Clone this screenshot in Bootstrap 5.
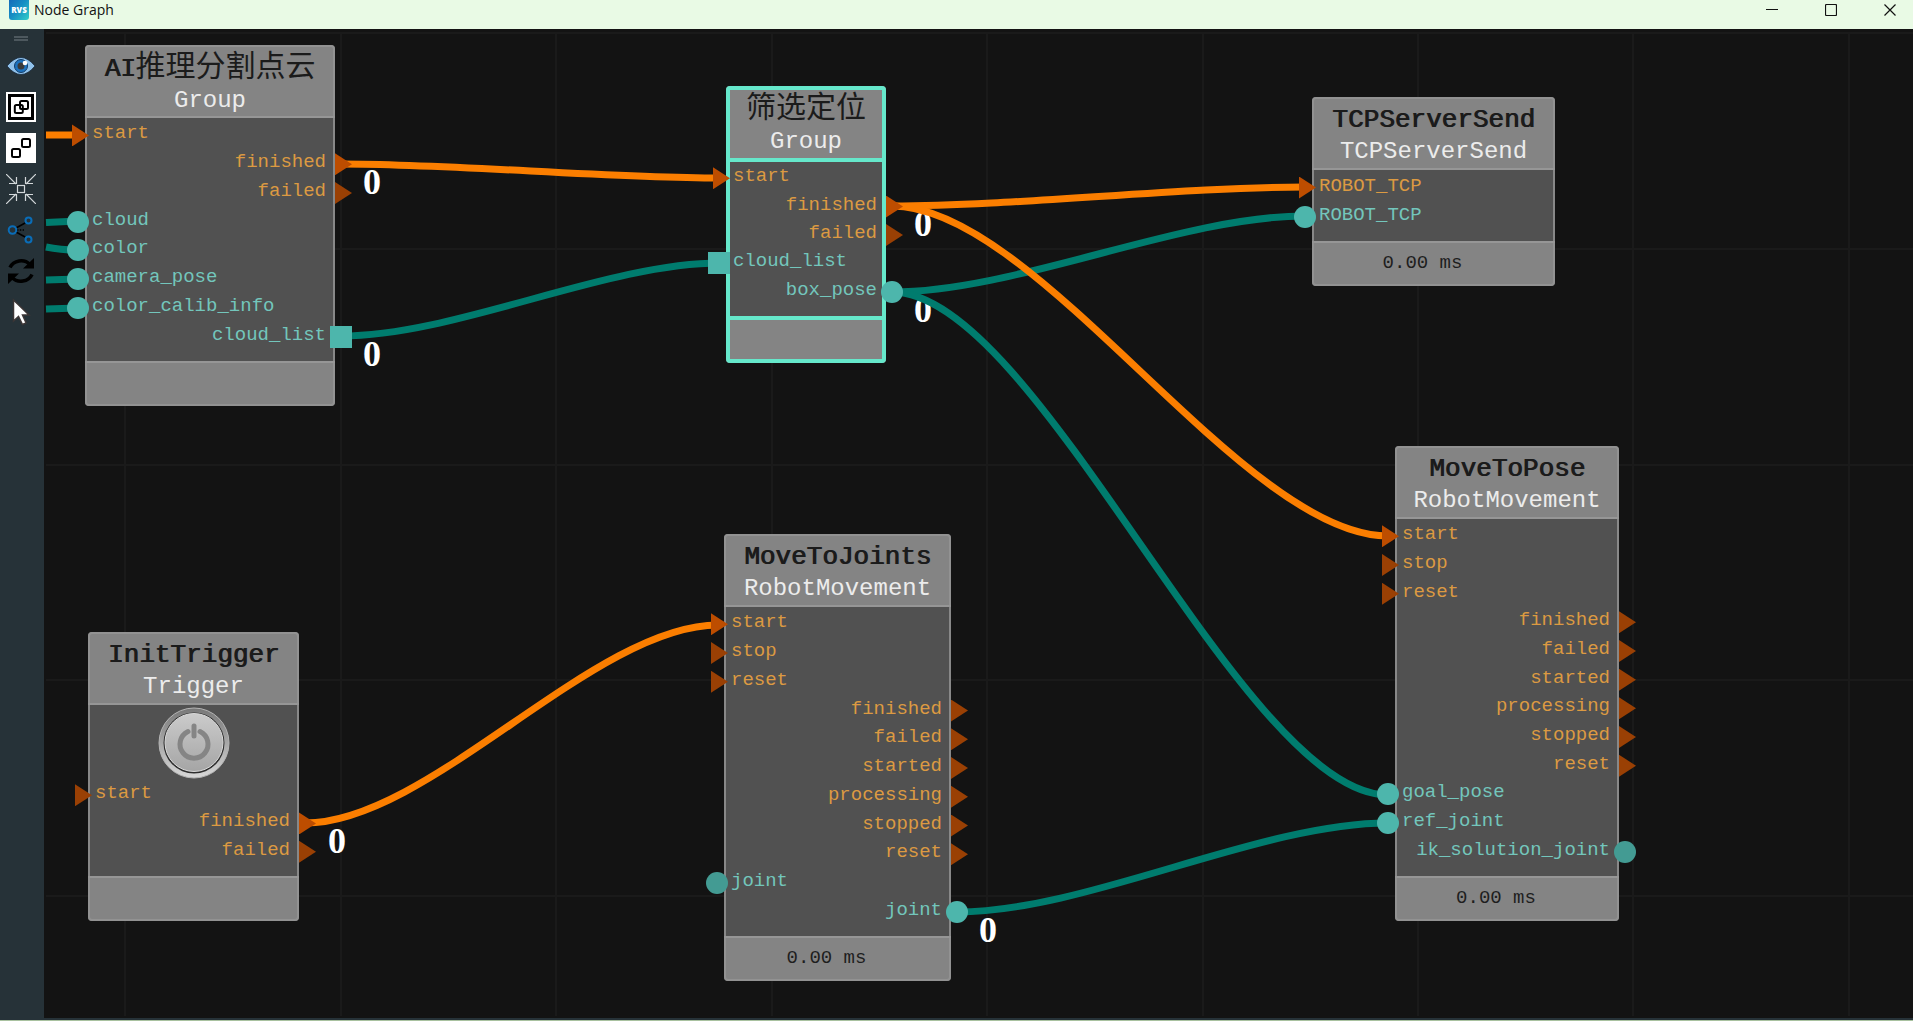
<!DOCTYPE html>
<html lang="zh-CN">
<head>
<meta charset="utf-8">
<meta name="viewport" content="width=device-width, initial-scale=1">
<title>Node Graph</title>
<link href="https://cdn.jsdelivr.net/npm/bootstrap@5.3.0/dist/css/bootstrap.min.css" rel="stylesheet">
<style>
  body { font-family: "Open Sans", "Noto Sans CJK SC", sans-serif; background: #131313; }
  .titlebar { height: 29px; background: #e9fae5; color: #111; }
  .titlebar .app-name { font-size: 14px; line-height: 20px; }
  .win-controls { gap: 13px; }
  .win-btn { width: 46px; height: 20px; color: #111; }
  .toolbar { width: 44px; background: #263238; padding: 7px 2px 0 0; }
  .grip { width: 14px; height: 5px; border-top: 2px solid #4d585e; border-bottom: 2px solid #4d585e; margin-bottom: 10px; }
  .tool { width: 30px; height: 30px; margin-bottom: 11px; }
  .tool svg, .win-btn svg, .power svg { display: block; }
  .bottom-edge { height: 3px; background: #a9c2a0; border-top: 2px solid #263238; }

  .canvas { background: #131313; font-family: "Liberation Mono", "Noto Sans CJK SC", monospace; }
  .wires { left: 0; top: 0; }
  .wires path { fill: none; stroke-width: 7; }
  .wires .flow { stroke: #fb7e00; }
  .wires .data { stroke: #007c6e; }
  .wires text { font: bold 36px "Liberation Serif", serif; fill: #fff; text-anchor: middle; }
  .wires .grid-lines { stroke: #1a1a1a; stroke-width: 2; }

  .gnode { position: absolute; border: 0; border-radius: 4px; background: none; }
  .gnode::after { content: ""; position: absolute; inset: 0; border: 2px solid #969696; border-radius: 4px; pointer-events: none; opacity: .8; }
  .gnode .card-header { height: 73px; padding: 8px 0 0; background: rgba(139, 139, 139, .94); border-bottom: 2px solid #969696; border-radius: 4px 4px 0 0; text-align: center; }
  .gnode .card-body { display: flex; flex-direction: column; padding: 1px 0 12px; background: #515151; }
  .gnode .card-footer { height: 45px; padding: 0 22px 3px 0; background: rgba(139, 139, 139, .94); border-top: 2px solid #969696; border-radius: 0 0 4px 4px; color: #1e1e1e; font-size: 19px; }
  .node-name { font-size: 26px; line-height: 31px; font-weight: 400; color: #1b1b1b; text-shadow: 1px 0 #1b1b1b; margin: 0; white-space: nowrap; }
  .node-name .han { font-size: 30px; text-shadow: none; }
  .node-kind { font-size: 24px; line-height: 31px; color: #ececec; }

  .port { position: relative; flex: 1 1 0; display: flex; align-items: center; padding: 0 9px 0 7px; font-size: 19px; line-height: 24px; color: #dc9a42; }
  .port.out { justify-content: flex-end; }
  .port.teal { color: #73c6bc; }
  .pin { position: absolute; z-index: 2; top: calc(50% - 9px); left: -18px; width: 22px; height: 22px; border-radius: 50%; background: #439b93; }
  .out .pin { left: auto; right: -17px; }
  .pin.on { background: #4db6ac; }
  .pin.sq { border-radius: 0; }
  .pin.tri { left: -13px; width: 17px; border-radius: 0; background: #9a4004; clip-path: polygon(0 0, 100% 50%, 0 100%); }
  .out .pin.tri { left: auto; right: -17px; }
  .pin.tri.on { background: #bd4d00; }

  .selected::after { border: 4px solid #66e8cb; opacity: 1; z-index: 1; }
  .selected .card-header, .selected .card-footer { border-color: #66e8cb; border-width: 4px; }
  .selected .card-header { height: 76px; }
  .selected .card-body { padding-top: 0; }
  .selected .card-footer { height: 47px; }

  .power { height: 73px; flex: 0 0 auto; }

  #segment { left: 41px; top: 16px; width: 250px; height: 361px; }
  #filter { left: 682px; top: 57px; width: 160px; height: 277px; }
  #tcp { left: 1268px; top: 68px; width: 243px; height: 189px; }
  #pose { left: 1351px; top: 417px; width: 224px; height: 475px; }
  #joints { left: 680px; top: 505px; width: 227px; height: 447px; }
  #init { left: 44px; top: 603px; width: 211px; height: 289px; }
</style>
</head>
<body>
<div class="d-flex flex-column vh-100 overflow-hidden">
  <header class="titlebar d-flex align-items-start flex-shrink-0">
    <svg class="ms-2" width="22" height="20" viewBox="0 0 22 20" aria-hidden="true">
      <defs><linearGradient id="logo" x1="0" y1="0" x2="1" y2="1"><stop offset="0" stop-color="#1565b8"/><stop offset=".5" stop-color="#168fc4"/><stop offset="1" stop-color="#35cfc9"/></linearGradient></defs>
      <rect x="1" y="-3" width="20" height="23" rx="3" fill="url(#logo)"/>
      <text x="11" y="13" text-anchor="middle" font-family="Open Sans, sans-serif" font-weight="800" font-size="8" fill="#fff">RVS</text>
    </svg>
    <div class="app-name ms-1">Node Graph</div>
    <div class="win-controls d-flex ms-auto">
      <button class="win-btn btn p-0 border-0 d-flex justify-content-center align-items-center" aria-label="Minimize"><svg width="12" height="12"><path d="M0 5.500H12" stroke="currentColor"/></svg></button>
      <button class="win-btn btn p-0 border-0 d-flex justify-content-center align-items-center" aria-label="Maximize"><svg width="12" height="12"><rect x=".5" y=".5" width="11" height="11" rx="1" fill="none" stroke="currentColor" stroke-width="1.200"/></svg></button>
      <button class="win-btn btn p-0 border-0 d-flex justify-content-center align-items-center" aria-label="Close"><svg width="12" height="12"><path d="M.5 .5L11.500 11.500M11.500 .5L.5 11.500" stroke="currentColor" stroke-width="1.200"/></svg></button>
    </div>
  </header>

  <div class="d-flex flex-grow-1 overflow-hidden">
    <nav class="toolbar d-flex flex-column align-items-center flex-shrink-0" aria-label="Tools">
      <div class="grip"></div>
      <button class="tool btn p-0 border-0" aria-label="View"><svg width="30" height="30" viewBox="0 0 30 30"><path d="M1 15Q15-2 29 15Q15 32 1 15Z" fill="#8fc1ea" stroke="#182a3c" stroke-width=".8"/><circle cx="15" cy="15" r="6.500" fill="#1d72bd" stroke="#123c68"/><circle cx="15" cy="15" r="3.500" fill="#3a3a3a"/><circle cx="19" cy="12" r="2.300" fill="#fff"/></svg></button>
      <button class="tool btn p-0 border-0" aria-label="Group"><svg width="30" height="30" viewBox="0 0 30 30"><rect width="30" height="30" fill="#fff"/><g fill="none" stroke="#000"><rect x="3.500" y="3.500" width="23" height="23" stroke-width="3"/><rect x="8.800" y="13" width="8" height="8" rx="1.500" stroke-width="2"/><rect x="14" y="9" width="8" height="8" rx="1.500" stroke-width="2"/></g></svg></button>
      <button class="tool btn p-0 border-0" aria-label="Ungroup"><svg width="30" height="30" viewBox="0 0 30 30"><rect width="30" height="30" fill="#fff"/><g fill="none" stroke="#000" stroke-width="2"><rect x="6" y="16" width="8" height="8" rx="1.500"/><rect x="16" y="6" width="8" height="8" rx="1.500"/></g></svg></button>
      <button class="tool btn p-0 border-0" aria-label="Center view"><svg width="30" height="30" viewBox="0 0 30 30" fill="none" stroke="#d3d8da" stroke-width="1.200"><rect x="11.500" y="11.500" width="7" height="7"/><path d="M0 0L10 10M3 9.500H10.500V3M30 0L20 10M27 9.500H19.500V3M0 30L10 20M3 20.500H10.500V27M30 30L20 20M27 20.500H19.500V27"/></svg></button>
      <button class="tool btn p-0 border-0" aria-label="Layout graph"><svg width="30" height="30" viewBox="0 0 30 30" fill="none"><path d="M10 13L20 7.500M10 17L20 22.500" stroke="#000" stroke-width="1.500"/><path d="M11 15H18" stroke="#000" stroke-width="1.500" stroke-dasharray="1.500 1.300"/><g stroke="#0a6db8" stroke-width="2"><circle cx="6.500" cy="15" r="3.800"/><circle cx="22.500" cy="5.500" r="3"/><circle cx="22.500" cy="24.500" r="3"/></g></svg></button>
      <button class="tool btn p-0 border-0" aria-label="Refresh"><svg width="30" height="30" viewBox="0 0 30 30"><g fill="none" stroke="#000" stroke-width="3.500"><path d="M4 11.500A12 11 0 0 1 24 8.500"/><path d="M26 18.500A12 11 0 0 1 6 21.500"/></g><path d="M28 2V12.500H17ZM2 28V17.500H13Z"/></svg></button>
      <button class="tool btn p-0 border-0" aria-label="Select"><svg width="30" height="30" viewBox="0 0 30 30"><path d="M7.500 3V24L12.500 19.500L16.500 27.500L20 25.800L16.500 18H23Z" fill="#fff" stroke="#3c3636" stroke-width="1.500"/></svg></button>
    </nav>

    <main class="canvas position-relative flex-grow-1 overflow-hidden">
      <svg class="wires position-absolute w-100 h-100" aria-label="Connections">
        <g transform="translate(-44 -29)">
          <path class="grid-lines" d="M125 33V1016M341 33V1016M556 33V1016M772 33V1016M987 33V1016M1203 33V1016M1418 33V1016M1633 33V1016M1849 33V1016M46 33H1913M46 249H1913M46 465H1913M46 680H1913M46 896H1913"/>
          <text x="372" y="194">0</text><text x="372" y="366">0</text>
          <text x="923" y="236">0</text><text x="923" y="322">0</text>
          <text x="337" y="853">0</text><text x="988" y="942">0</text>
          <path class="data" d="M46 222.500L78 221"/>
          <path class="data" d="M46 247Q60 250 78 250"/>
          <path class="data" d="M46 280L78 279"/>
          <path class="data" d="M46 309L78 308"/>
          <path class="data" d="M341 336C455 336 606 263 720 263"/>
          <path class="data" d="M892 292C1016 292 1181 216 1305 216"/>
          <path class="data" d="M892 292C1038 292 1242 795 1388 795"/>
          <path class="data" d="M957 912C1086 912 1259 823 1388 823"/>
          <path class="flow" d="M46 135H76"/>
          <path class="flow" d="M341 164C455 164 606 178 720 178"/>
          <path class="flow" d="M892 206C1016 206 1181 187 1305 187"/>
          <path class="flow" d="M892 206C1038 206 1242 536 1388 536"/>
          <path class="flow" d="M305 823C429 823 594 625 718 625"/>
        </g>
      </svg>

      <section class="gnode card" id="segment">
        <div class="card-header"><h2 class="node-name">AI<span class="han">推理分割点云</span></h2><div class="node-kind">Group</div></div>
        <div class="card-body">
          <div class="port">start<i class="pin tri on"></i></div>
          <div class="port out">finished<i class="pin tri on"></i></div>
          <div class="port out">failed<i class="pin tri"></i></div>
          <div class="port teal">cloud<i class="pin on"></i></div>
          <div class="port teal">color<i class="pin on"></i></div>
          <div class="port teal">camera_pose<i class="pin on"></i></div>
          <div class="port teal">color_calib_info<i class="pin on"></i></div>
          <div class="port teal out">cloud_list<i class="pin sq on"></i></div>
        </div>
        <div class="card-footer"></div>
      </section>

      <section class="gnode card selected" id="filter">
        <div class="card-header"><h2 class="node-name"><span class="han">筛选定位</span></h2><div class="node-kind">Group</div></div>
        <div class="card-body">
          <div class="port">start<i class="pin tri on"></i></div>
          <div class="port out">finished<i class="pin tri on"></i></div>
          <div class="port out">failed<i class="pin tri"></i></div>
          <div class="port teal">cloud_list<i class="pin sq on"></i></div>
          <div class="port teal out">box_pose<i class="pin on"></i></div>
        </div>
        <div class="card-footer"></div>
      </section>

      <section class="gnode card" id="tcp">
        <div class="card-header"><h2 class="node-name">TCPServerSend</h2><div class="node-kind">TCPServerSend</div></div>
        <div class="card-body">
          <div class="port">ROBOT_TCP<i class="pin tri on"></i></div>
          <div class="port teal">ROBOT_TCP<i class="pin on"></i></div>
        </div>
        <div class="card-footer d-flex align-items-center justify-content-center">0.00 ms</div>
      </section>

      <section class="gnode card" id="pose">
        <div class="card-header"><h2 class="node-name">MoveToPose</h2><div class="node-kind">RobotMovement</div></div>
        <div class="card-body">
          <div class="port">start<i class="pin tri on"></i></div>
          <div class="port">stop<i class="pin tri"></i></div>
          <div class="port">reset<i class="pin tri"></i></div>
          <div class="port out">finished<i class="pin tri"></i></div>
          <div class="port out">failed<i class="pin tri"></i></div>
          <div class="port out">started<i class="pin tri"></i></div>
          <div class="port out">processing<i class="pin tri"></i></div>
          <div class="port out">stopped<i class="pin tri"></i></div>
          <div class="port out">reset<i class="pin tri"></i></div>
          <div class="port teal">goal_pose<i class="pin on"></i></div>
          <div class="port teal">ref_joint<i class="pin on"></i></div>
          <div class="port teal out">ik_solution_joint<i class="pin"></i></div>
        </div>
        <div class="card-footer d-flex align-items-center justify-content-center">0.00 ms</div>
      </section>

      <section class="gnode card" id="joints">
        <div class="card-header"><h2 class="node-name">MoveToJoints</h2><div class="node-kind">RobotMovement</div></div>
        <div class="card-body">
          <div class="port">start<i class="pin tri on"></i></div>
          <div class="port">stop<i class="pin tri"></i></div>
          <div class="port">reset<i class="pin tri"></i></div>
          <div class="port out">finished<i class="pin tri"></i></div>
          <div class="port out">failed<i class="pin tri"></i></div>
          <div class="port out">started<i class="pin tri"></i></div>
          <div class="port out">processing<i class="pin tri"></i></div>
          <div class="port out">stopped<i class="pin tri"></i></div>
          <div class="port out">reset<i class="pin tri"></i></div>
          <div class="port teal">joint<i class="pin"></i></div>
          <div class="port teal out">joint<i class="pin on"></i></div>
        </div>
        <div class="card-footer d-flex align-items-center justify-content-center">0.00 ms</div>
      </section>

      <section class="gnode card" id="init">
        <div class="card-header"><h2 class="node-name">InitTrigger</h2><div class="node-kind">Trigger</div></div>
        <div class="card-body">
          <button class="power btn p-0 border-0 align-self-center" aria-label="Trigger">
            <svg width="72" height="72" viewBox="0 0 72 72">
              <defs>
                <linearGradient id="rim" x1="0" y1="0" x2="0" y2="1"><stop offset="0" stop-color="#777"/><stop offset="1" stop-color="#d8d8d8"/></linearGradient>
                <linearGradient id="face" x1="0" y1="0" x2="0" y2="1"><stop offset="0" stop-color="#cbcbcb"/><stop offset="1" stop-color="#a5a5a5"/></linearGradient>
              </defs>
              <circle cx="36" cy="36" r="35" fill="url(#rim)" stroke="#b5b5b5"/>
              <circle cx="36" cy="36" r="30.500" fill="#2e2e2e"/>
              <circle cx="36" cy="35.500" r="29" fill="url(#face)" stroke="#d9d9d9"/>
              <path d="M30 24.500A14 14 0 1 0 42 24.500" fill="none" stroke="#858585" stroke-width="5" stroke-linecap="round"/>
              <path d="M36 19V29" stroke="#858585" stroke-width="5" stroke-linecap="round"/>
            </svg>
          </button>
          <div class="port">start<i class="pin tri"></i></div>
          <div class="port out">finished<i class="pin tri on"></i></div>
          <div class="port out">failed<i class="pin tri"></i></div>
        </div>
        <div class="card-footer"></div>
      </section>
    </main>
  </div>
  <div class="bottom-edge flex-shrink-0"></div>
</div>
<script src="https://cdn.jsdelivr.net/npm/bootstrap@5.3.0/dist/js/bootstrap.bundle.min.js"></script>
</body>
</html>
